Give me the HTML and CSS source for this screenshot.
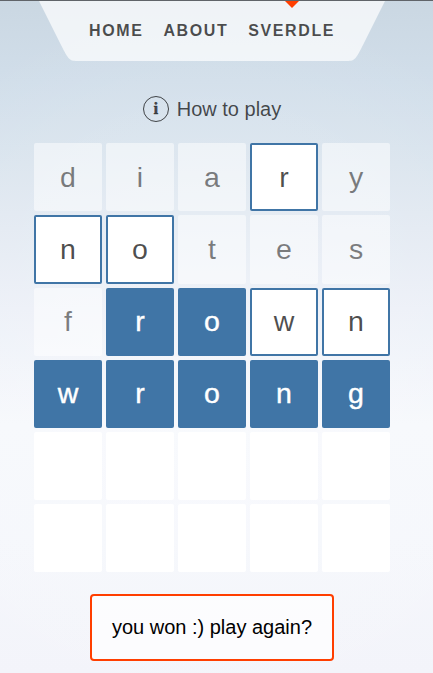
FILE: index.html
```
<!DOCTYPE html>
<html lang="en">
<head>
<meta charset="utf-8">
<title>Sverdle</title>
<link rel="stylesheet" href="styles.css">
</head>
<body>
<header>
  <nav>
    <svg class="corner" viewBox="0 0 2 3" aria-hidden="true"><path d="M0,0 L1,2 C1.5,3 1.5,3 2,3 L2,0 Z"/></svg>
    <ul>
      <li>Home</li>
      <li>About</li>
      <li class="current">Sverdle</li>
    </ul>
    <svg class="corner" viewBox="0 0 2 3" aria-hidden="true"><path d="M0,0 L0,3 C0.5,3 0.5,3 1,2 L2,0 Z"/></svg>
  </nav>
</header>
<main>
  <a class="how"><span class="info">i</span>How to play</a>
  <div class="grid">
    <div class="tile missing">d</div><div class="tile missing">i</div><div class="tile missing">a</div><div class="tile close">r</div><div class="tile missing">y</div>
    <div class="tile close">n</div><div class="tile close">o</div><div class="tile missing">t</div><div class="tile missing">e</div><div class="tile missing">s</div>
    <div class="tile missing">f</div><div class="tile exact">r</div><div class="tile exact">o</div><div class="tile close">w</div><div class="tile close">n</div>
    <div class="tile exact">w</div><div class="tile exact">r</div><div class="tile exact">o</div><div class="tile exact">n</div><div class="tile exact">g</div>
    <div class="tile"></div><div class="tile"></div><div class="tile"></div><div class="tile"></div><div class="tile"></div>
    <div class="tile"></div><div class="tile"></div><div class="tile"></div><div class="tile"></div><div class="tile"></div>
  </div>
  <button class="restart">you won :) play again?</button>
</main>
</body>
</html>
```
FILE: styles.css
```
* { box-sizing: border-box; }
body {
  margin: 0;
  height: 673px;
  overflow: hidden;
  border-top: 1px solid #606469;
  font-family: "Liberation Sans", Arial, sans-serif;
  color: rgba(0, 0, 0, 0.7);
  background:
    radial-gradient(90% 55% at 49% 55%, rgba(255, 255, 255, 0.3) 0%, rgba(255, 255, 255, 0) 100%),
    linear-gradient(180deg, #cad7e2 0%, #d1deea 12%, #d8e3ed 22%, #e2e9f2 34%, #ebeff7 46%, #f6f8fc 63%, #f5f7fc 80%, #f3f4fa 100%);
}
header, main { width: 424px; }
nav { display: flex; justify-content: center; }
.corner { width: 40px; height: 60px; display: block; }
.corner path { fill: rgba(255, 255, 255, 0.7); }
ul {
  display: flex;
  width: 266px;
  height: 60px;
  margin: 0;
  padding: 0;
  list-style: none;
  background: rgba(255, 255, 255, 0.7);
}
li {
  position: relative;
  display: flex;
  align-items: center;
  padding: 0 10px;
  font-size: 16px;
  font-weight: 700;
  letter-spacing: 1.6px;
  text-transform: uppercase;
}
.current::before {
  content: "";
  position: absolute;
  top: 0;
  left: calc(50% - 7px);
  border: 7px solid transparent;
  border-top-color: #ff3e00;
  border-bottom: 0;
}
main { display: flex; flex-direction: column; align-items: center; }
.how {
  display: flex;
  align-items: center;
  gap: 8px;
  height: 26px;
  margin-top: 35px;
  font-size: 20px;
}
.info {
  display: grid;
  place-items: center;
  width: 26px;
  height: 26px;
  border: 1px solid rgba(0, 0, 0, 0.7);
  border-radius: 50%;
  font-family: "Liberation Serif", serif;
  font-size: 17px;
  font-weight: 700;
  -webkit-text-stroke: 0.4px;
}
.grid {
  display: grid;
  grid-template-columns: repeat(5, 68px);
  grid-template-rows: 68px 69px repeat(4, 68px);
  gap: 4px;
  margin-top: 21px;
}
.tile {
  display: flex;
  align-items: center;
  justify-content: center;
  border-radius: 2px;
  background: #fff;
  font-size: 28.5px;
  line-height: 1;
}
.tile:nth-child(n+11) { padding-bottom: 2px; }
.missing { background: rgba(255, 255, 255, 0.5); color: rgba(0, 0, 0, 0.5); }
.close { border: 2px solid #4075a6; }
.exact { background: #4075a6; color: #fff; -webkit-text-stroke: 0.4px #fff; }
.restart {
  width: 244px;
  height: 67px;
  margin-top: 22px;
  border: 2px solid #ff3e00;
  border-radius: 4px;
  background: rgba(255, 255, 255, 0.7);
  color: #000;
  font: 20px "Liberation Sans", Arial, sans-serif;
}
```
